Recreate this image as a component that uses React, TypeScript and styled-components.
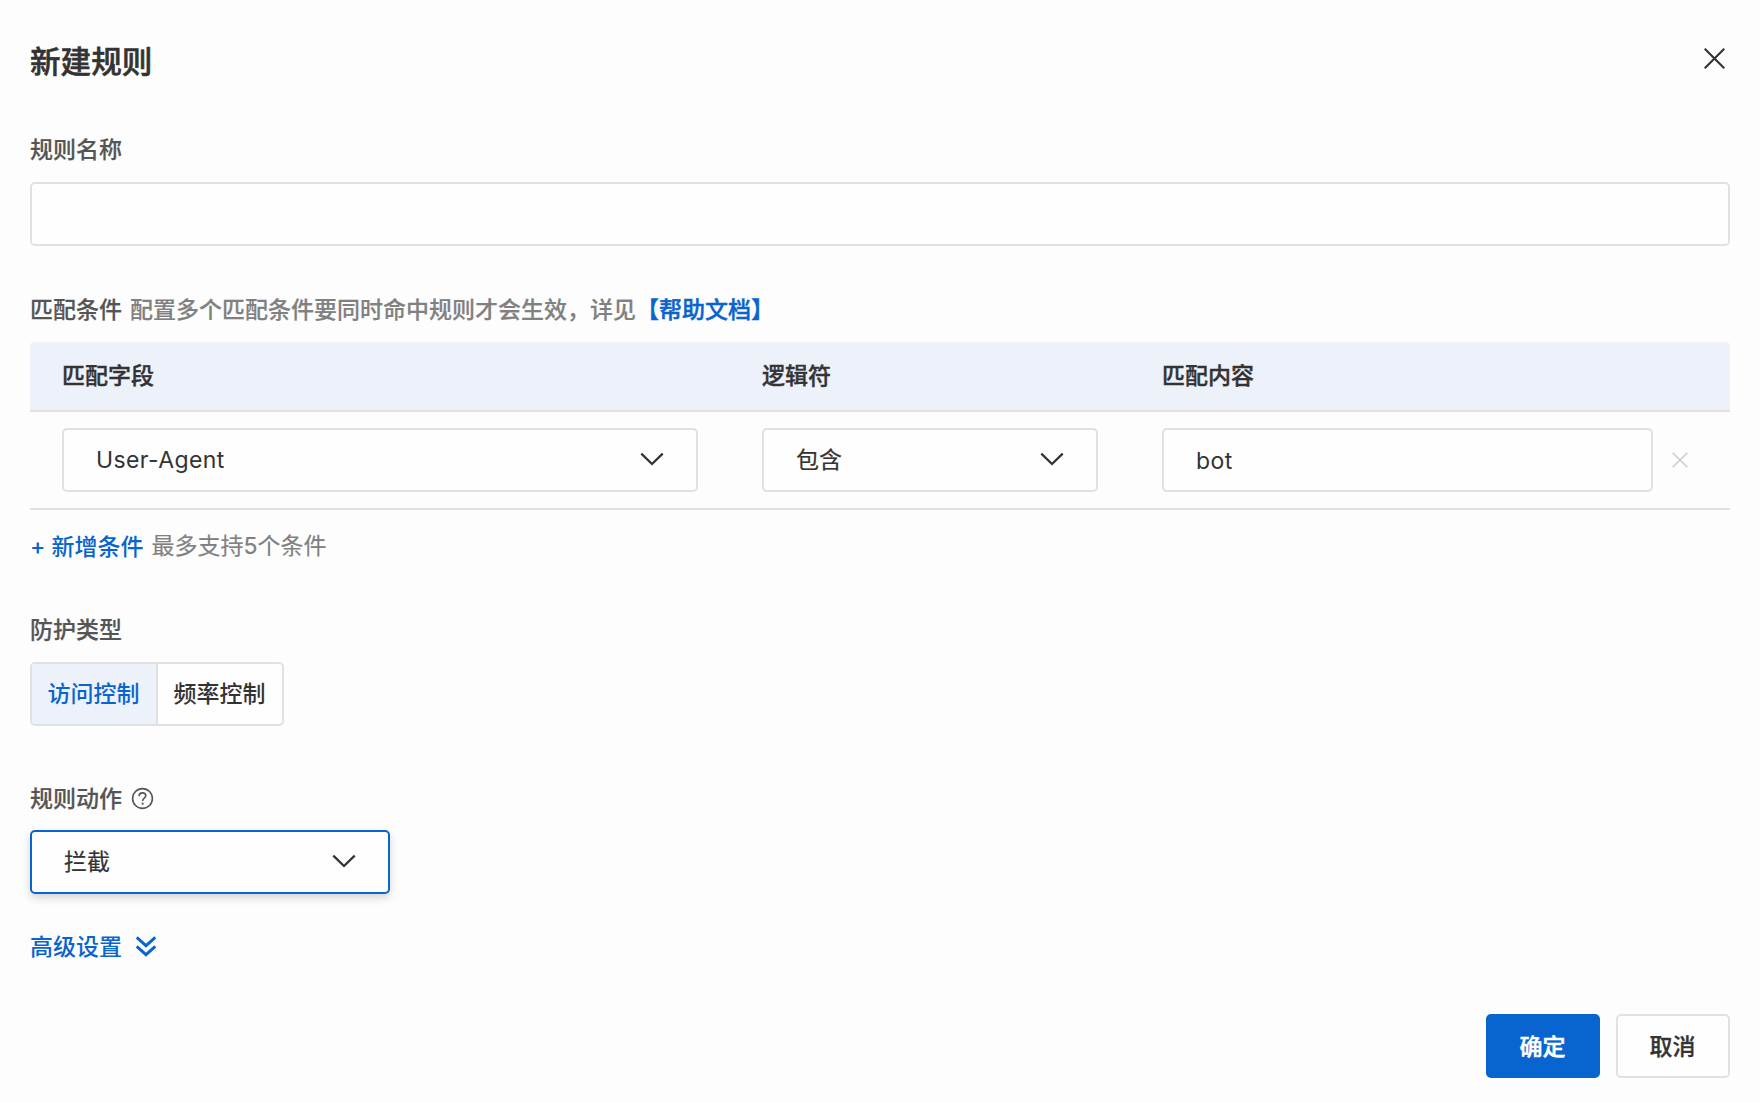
import React from "react";
import styled, { createGlobalStyle, css } from "styled-components";

const color = {
  page: "#fdfdfd",
  text: "#333333",
  label: "#555555",
  muted: "#808080",
  primary: "#0864ce",
  line: "#e1e1e1",
  tint: "#edf1fa",
  faint: "#cccccc",
};

const GlobalStyle = createGlobalStyle`
  *, *::before, *::after { box-sizing: border-box; }
  body {
    margin: 0;
    background: ${color.page};
    color: ${color.text};
    font-family: Inter, "Noto Sans CJK SC", sans-serif;
    font-size: 23px;
    line-height: 32px;
  }
  button, input { font: inherit; color: inherit; margin: 0; }
  svg { display: block; flex: none; }
`;

const medium = css`
  font-weight: 500;
  -webkit-text-stroke: 0.2px currentColor;
`;

const Dialog = styled.main`
  width: 1760px;
  height: 1102px;
  padding: 38px 30px 24px;
  display: flex;
  flex-direction: column;
`;

const Header = styled.header`
  display: flex;
  justify-content: space-between;
  align-items: flex-start;
  height: 96px;
`;

const Title = styled.h1`
  margin: 1px 0 0;
  font-size: 30.6px;
  line-height: 46px;
  font-weight: 500;
  -webkit-text-stroke: 0.55px currentColor;
`;

const IconButton = styled.button<{ $tone?: string }>`
  display: flex;
  padding: 0;
  border: 0;
  background: none;
  color: ${(p) => p.$tone ?? color.text};
`;

const CloseButton = styled(IconButton)`
  margin: 9.5px 5.5px 0 0;
`;

const Section = styled.section<{ $gap: number }>`
  display: flex;
  flex-direction: column;
  align-items: stretch;
  margin-bottom: ${(p) => p.$gap}px;
`;

const Label = styled.div<{ $space?: number }>`
  display: flex;
  align-items: center;
  height: 32px;
  margin-bottom: ${(p) => p.$space ?? 16}px;
  color: ${color.label};
  ${medium}
  white-space: pre;
`;

const Hint = styled.span`
  margin-left: 8px;
  color: ${color.muted};
`;

const CountHint = styled(Hint)`
  padding-bottom: 2px;
  -webkit-text-stroke: 0.15px currentColor;
`;

const Link = styled.a`
  color: ${color.primary};
  ${medium}
  text-decoration: none;
`;

const HelpLink = styled(Link)`
  -webkit-text-stroke-width: 0.45px;
`;

const field = css`
  height: 64px;
  border: 2px solid ${color.line};
  border-radius: 5px;
  background: #fefefe;
`;

const TextInput = styled.input`
  ${field}
  width: 100%;
  min-width: 0;
  padding: 1px 32px 0;
  letter-spacing: 0.45px;
  outline: none;
`;

const SelectBox = styled.div<{ $active?: boolean; $width?: string }>`
  ${field}
  display: flex;
  align-items: center;
  justify-content: space-between;
  width: ${(p) => p.$width ?? "100%"};
  padding: 0 32px;
  ${(p) =>
    p.$active &&
    css`
      border-color: ${color.primary};
      box-shadow: 0 4px 8px rgba(0, 0, 0, 0.16);
    `}
`;

const Value = styled.span<{ $latin: boolean }>`
  letter-spacing: ${(p) => (p.$latin ? "0.4px" : "0")};
  -webkit-text-stroke: ${(p) => (p.$latin ? "0" : "0.2px")} currentColor;
`;

const Row = styled.div`
  display: grid;
  grid-template-columns: 700px 400px 600px;
  border-bottom: 2px solid ${color.line};
`;

const HeadRow = styled(Row)`
  height: 70px;
  align-items: center;
  background: ${color.tint};
  border-radius: 4px 4px 0 0;
  font-weight: 500;
  -webkit-text-stroke: 0.4px currentColor;
`;

const BodyRow = styled(Row)`
  height: 98px;
  align-items: center;
`;

const Cell = styled.div`
  padding: 0 32px;
`;

const ContentCell = styled(Cell)`
  display: grid;
  grid-template-columns: 491px auto;
  column-gap: 18.5px;
  align-items: center;
  justify-content: start;
`;

const AddRow = styled.div`
  display: flex;
  align-items: center;
  height: 32px;
  margin: 21px 0 51px;
  white-space: pre;
`;

const AddLink = styled(Link)`
  -webkit-text-stroke-width: 0;
`;

const Segments = styled.div`
  ${field}
  display: inline-flex;
  align-self: flex-start;
  width: 254px;
  overflow: hidden;
`;

const Segment = styled.button<{ $active?: boolean }>`
  flex: 1 1 0;
  padding: 0 1px 0 0;
  border: 0;
  background: ${(p) => (p.$active ? color.tint : "transparent")};
  color: ${(p) => (p.$active ? color.primary : color.text)};
  font-weight: 500;
  & + & {
    border-left: 2px solid ${color.line};
  }
`;

const Advanced = styled.a`
  display: flex;
  align-items: center;
  gap: 13px;
  height: 32px;
  color: ${color.primary};
  font-weight: 500;
`;

const Footer = styled.footer`
  display: flex;
  justify-content: flex-end;
  gap: 16px;
  margin-top: auto;
`;

const Button = styled.button<{ $primary?: boolean }>`
  width: 114px;
  height: 64px;
  padding: 1px 1px 0 0;
  border: 2px solid ${(p) => (p.$primary ? color.primary : color.line)};
  border-radius: 5px;
  background: ${(p) => (p.$primary ? color.primary : "#fefefe")};
  color: ${(p) => (p.$primary ? "#fff" : color.text)};
  font-weight: 500;
  -webkit-text-stroke: ${(p) => (p.$primary ? "0.5px" : "0.3px")} currentColor;
`;

const Cross = ({ size, weight }: { size: number; weight: number }) => (
  <svg width={size} height={size} viewBox={`0 0 ${size} ${size}`} fill="none" stroke="currentColor" strokeWidth={weight}>
    <path d={`M.7.7 ${size - 0.7} ${size - 0.7}M${size - 0.7}.7.7 ${size - 0.7}`} />
  </svg>
);

const Chevron = () => (
  <svg width="24" height="16" viewBox="0 0 24 16" fill="none" stroke={color.text} strokeWidth="2.3">
    <path d="M1.3 1.6 12 12 22.7 1.6" />
  </svg>
);

const DoubleChevron = () => (
  <svg width="22" height="22" viewBox="0 0 22 22" fill="none" stroke="currentColor" strokeWidth="2.9">
    <path d="M1.7 1.4 11 9.7 20.3 1.4M1.7 10.4 11 18.7 20.3 10.4" />
  </svg>
);

const HelpIcon = styled.svg`
  margin: 0 0 2px 8.5px;
`;

function Select({ value, ...rest }: { value: string; $active?: boolean; $width?: string }) {
  return (
    <SelectBox {...rest}>
      <Value $latin={/^[\x20-\x7e]+$/.test(value)}>{value}</Value>
      <Chevron />
    </SelectBox>
  );
}

export default function App() {
  return (
    <>
      <GlobalStyle />
      <Dialog>
        <Header>
          <Title>新建规则</Title>
          <CloseButton aria-label="关闭">
            <Cross size={21} weight={2.1} />
          </CloseButton>
        </Header>

        <Section $gap={48}>
          <Label>规则名称</Label>
          <TextInput />
        </Section>

        <Section $gap={0}>
          <Label>
            匹配条件
            <Hint>配置多个匹配条件要同时命中规则才会生效，详见</Hint>
            <HelpLink>【帮助文档】</HelpLink>
          </Label>
          <HeadRow>
            <Cell>匹配字段</Cell>
            <Cell>逻辑符</Cell>
            <Cell>匹配内容</Cell>
          </HeadRow>
          <BodyRow>
            <Cell><Select value="User-Agent" /></Cell>
            <Cell><Select value="包含" /></Cell>
            <ContentCell>
              <TextInput defaultValue="bot" />
              <IconButton $tone={color.faint} aria-label="删除">
                <Cross size={16} weight={1.5} />
              </IconButton>
            </ContentCell>
          </BodyRow>
          <AddRow>
            <AddLink>+ 新增条件</AddLink>
            <CountHint>最多支持5个条件</CountHint>
          </AddRow>
        </Section>

        <Section $gap={57}>
          <Label>防护类型</Label>
          <Segments>
            <Segment $active>访问控制</Segment>
            <Segment>频率控制</Segment>
          </Segments>
        </Section>

        <Section $gap={37}>
          <Label $space={15}>
            规则动作
            <HelpIcon width="23" height="23" viewBox="0 0 23 23" fill="none" stroke="currentColor" strokeWidth="1.6">
              <circle cx="11.5" cy="11.5" r="9.9" />
              <path d="M8.1 9.2c0-2 1.4-3.3 3.3-3.3s3.4 1.1 3.4 2.9c0 2.3-3.2 2.5-3.2 5.1" />
              <circle cx="11.6" cy="16.7" r="1.1" fill="currentColor" stroke="none" />
            </HelpIcon>
          </Label>
          <Select value="拦截" $active $width="360px" />
        </Section>

        <Advanced>
          高级设置
          <DoubleChevron />
        </Advanced>

        <Footer>
          <Button $primary>确定</Button>
          <Button>取消</Button>
        </Footer>
      </Dialog>
    </>
  );
}
